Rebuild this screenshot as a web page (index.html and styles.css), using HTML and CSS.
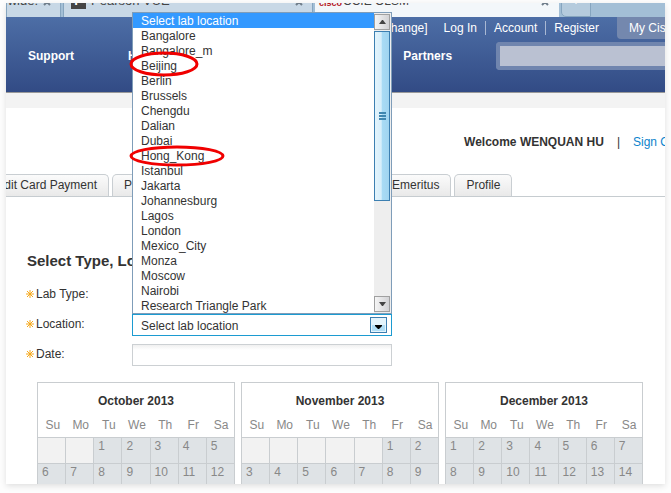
FILE: index.html
```
<!DOCTYPE html>
<html lang="en">
<head>
    <meta charset="UTF-8">
    <meta name="viewport" content="width=device-width, initial-scale=1.0">
    <title>CCIE OLSM</title>
    <link rel="stylesheet" href="styles.css">
</head>
<body>
<div class="window">
    <div class="browser-tabs">
        <div class="browser-tab first"><span>wide:</span><svg class="close" viewBox="0 0 8 8"><path d="M1 1L7 7M7 1L1 7"/></svg></div>
        <div class="browser-tab pearson"><span class="favicon">P</span><span>Pearson VUE</span><svg class="close" viewBox="0 0 8 8"><path d="M1 1L7 7M7 1L1 7"/></svg></div>
        <div class="browser-tab active"><span class="cisco">cisco</span><span>CCIE OLSM</span><svg class="close" viewBox="0 0 8 8"><path d="M1 1L7 7M7 1L1 7"/></svg></div>
        <button class="new-tab" type="button">+</button>
    </div>

    <header class="header">
        <div class="account-links">
            <a href="#" class="change">[change]</a>
            <a href="#">Log In</a>
            <a href="#">Account</a>
            <a href="#">Register</a>
            <a href="#" class="my-cisco">My Cisco</a>
        </div>
        <div class="main-row">
            <nav class="main-nav">
                <a href="#">Support</a>
                <a href="#">How to Buy</a>
                <a href="#">Training &amp; Events</a>
                <a href="#">Partners</a>
            </nav>
            <input class="search" type="text" aria-label="Search">
        </div>
    </header>

    <main class="content">
        <div class="welcome">
            <strong>Welcome WENQUAN HU</strong>
            <span>|</span>
            <a href="#">Sign Out</a>
        </div>

        <nav class="tabs">
            <a href="#">Credit Card Payment</a>
            <a href="#">Payment History</a>
            <a href="#" class="wide">Lab Exam History</a>
            <a href="#">Emeritus</a>
            <a href="#">Profile</a>
        </nav>

        <form class="lab-form">
            <h2>Select Type, Location and Date</h2>
            <div class="row">
                <label for="labType"><svg class="star" viewBox="0 0 8 8"><path d="M4 0V8M0 4H8M1 1L7 7M7 1L1 7"/></svg>Lab Type:</label>
                <select id="labType" class="field"><option></option></select>
            </div>
            <div class="row">
                <label for="location"><svg class="star" viewBox="0 0 8 8"><path d="M4 0V8M0 4H8M1 1L7 7M7 1L1 7"/></svg>Location:</label>
                <div class="combo">
                    <select id="location" class="field open"><option>Select lab location</option></select>
                    <svg class="combo-arrow" viewBox="0 0 17 16">
                        <rect x=".5" y=".5" width="16" height="15" fill="#e4f4fc" stroke="#3c7fb1"/>
                        <path d="M2 8H15V14H2Z" fill="#b1def6"/>
                        <path d="M5 8H12V9L9 12H8L5 9Z" fill="#000"/>
                    </svg>
                    <div class="dropdown">
                        <ul class="options" role="listbox" aria-label="Lab location">
                            <li role="option" aria-selected="true" class="selected">Select lab location</li>
                            <li role="option">Bangalore</li>
                            <li role="option">Bangalore_m</li>
                            <li role="option">Beijing
                                <svg class="mark beijing" viewBox="0 0 70 25"><ellipse cx="35" cy="12" rx="33" ry="11"/></svg>
                            </li>
                            <li role="option">Berlin</li>
                            <li role="option">Brussels</li>
                            <li role="option">Chengdu</li>
                            <li role="option">Dalian</li>
                            <li role="option">Dubai</li>
                            <li role="option">Hong_Kong
                                <svg class="mark hong-kong" viewBox="0 0 95 21"><ellipse cx="47" cy="10" rx="46" ry="9"/></svg>
                            </li>
                            <li role="option">Istanbul</li>
                            <li role="option">Jakarta</li>
                            <li role="option">Johannesburg</li>
                            <li role="option">Lagos</li>
                            <li role="option">London</li>
                            <li role="option">Mexico_City</li>
                            <li role="option">Monza</li>
                            <li role="option">Moscow</li>
                            <li role="option">Nairobi</li>
                            <li role="option">Research Triangle Park</li>
                        </ul>
                        <div class="scrollbar">
                            <button type="button" aria-label="Scroll up"><svg viewBox="0 0 7 4"><path d="M3 0H4L7 4H0Z"/></svg></button>
                            <div class="thumb"><i></i><i></i><i></i></div>
                            <button type="button" aria-label="Scroll down"><svg viewBox="0 0 7 4"><path d="M0 0H7L4 4H3Z"/></svg></button>
                        </div>
                    </div>
                </div>
            </div>
            <div class="row">
                <label for="date"><svg class="star" viewBox="0 0 8 8"><path d="M4 0V8M0 4H8M1 1L7 7M7 1L1 7"/></svg>Date:</label>
                <input id="date" class="field date" type="text">
            </div>
        </form>

        <div class="calendars">
            <table>
                <caption>October 2013</caption>
                <thead><tr><th>Su</th><th>Mo</th><th>Tu</th><th>We</th><th>Th</th><th>Fr</th><th>Sa</th></tr></thead>
                <tbody>
                    <tr><td class="empty"></td><td class="empty"></td><td>1</td><td>2</td><td>3</td><td>4</td><td>5</td></tr>
                    <tr><td>6</td><td>7</td><td>8</td><td>9</td><td>10</td><td>11</td><td>12</td></tr>
                </tbody>
            </table>
            <table>
                <caption>November 2013</caption>
                <thead><tr><th>Su</th><th>Mo</th><th>Tu</th><th>We</th><th>Th</th><th>Fr</th><th>Sa</th></tr></thead>
                <tbody>
                    <tr><td class="empty"></td><td class="empty"></td><td class="empty"></td><td class="empty"></td><td class="empty"></td><td>1</td><td>2</td></tr>
                    <tr><td>3</td><td>4</td><td>5</td><td>6</td><td>7</td><td>8</td><td>9</td></tr>
                </tbody>
            </table>
            <table>
                <caption>December 2013</caption>
                <thead><tr><th>Su</th><th>Mo</th><th>Tu</th><th>We</th><th>Th</th><th>Fr</th><th>Sa</th></tr></thead>
                <tbody>
                    <tr><td>1</td><td>2</td><td>3</td><td>4</td><td>5</td><td>6</td><td>7</td></tr>
                    <tr><td>8</td><td>9</td><td>10</td><td>11</td><td>12</td><td>13</td><td>14</td></tr>
                </tbody>
            </table>
        </div>
    </main>
</div>
</body>
</html>
```
FILE: styles.css
```
* {
    box-sizing: border-box;
}

body {
    margin: 0;
    padding: 3px 6px 9px;
    background-color: #fdfdfd;
    font-family: "Liberation Sans", Arial, sans-serif;
    font-size: 12px;
    color: #333;
}

a {
    text-decoration: none;
}

.window {
    overflow: hidden;
    background-color: #fff;
    box-shadow: 0 2px 6px rgba(0, 0, 0, 0.12);
}

/* browser tab strip */
.browser-tabs {
    display: flex;
    align-items: flex-end;
    gap: 2px;
    height: 14px;
    overflow: hidden;
    background-color: #a3bfd6;
}

.browser-tab {
    display: flex;
    flex-shrink: 0;
    align-items: flex-start;
    gap: 5px;
    height: 30px;
    padding: 0 9px;
    border: 1px solid #86a5bf;
    border-width: 0 1px;
    background-color: #c8d8e6;
    font-size: 13px;
    line-height: 28px;
    white-space: nowrap;
    color: #444;
}

.browser-tab.first {
    justify-content: flex-end;
    width: 55px;
}

.browser-tab.pearson {
    width: 250px;
    padding-left: 7px;
}

.browser-tab.active {
    gap: 1px;
    width: 244px;
    padding-left: 3px;
    border-color: #f3f7fa;
    background-color: #f3f7fa;
    font-size: 12px;
}

.close {
    flex-shrink: 0;
    width: 8px;
    height: 8px;
    margin-top: 11px;
    margin-left: auto;
    fill: none;
    stroke: #6f7d8a;
    stroke-width: 2px;
}

.favicon {
    width: 15px;
    height: 22px;
    background-color: #444;
    color: #fff;
    font-weight: bold;
    text-align: center;
}

.cisco {
    color: #b5121b;
    font-size: 9px;
    font-weight: bold;
    line-height: 32px;
}

.new-tab {
    width: 30px;
    height: 30px;
    padding: 0 0 4px;
    border: 1px solid #86a5bf;
    border-radius: 0 0 0 5px;
    background-color: #b5cbdd;
    color: #f5f8fa;
    font-size: 16px;
}

/* blue header */
.header {
    padding-bottom: 22px;
    border-bottom: 1px solid #999;
    background: linear-gradient(#4d6ea6, #324b85);
}

.header a {
    color: #fff;
}

.account-links {
    display: flex;
    justify-content: flex-end;
    align-items: center;
    height: 22px;
    white-space: nowrap;
}

.account-links a + a {
    padding-left: 8px;
    border-left: 1px solid #a9b8d3;
    margin-left: 8px;
}

.account-links .change + a {
    border-left: 0;
}

.account-links .my-cisco {
    width: 48px;
    height: 22px;
    margin-left: 18px;
    padding-left: 12px;
    border: 0;
    border-radius: 0 0 0 4px;
    background-color: #7488ae;
    line-height: 22px;
    overflow: hidden;
}

.main-row {
    display: flex;
    justify-content: space-between;
    align-items: center;
    margin-top: 3px;
    padding-left: 22px;
}

.main-nav {
    display: flex;
    gap: 54px;
    font-weight: bold;
    white-space: nowrap;
}

.search {
    width: 169px;
    height: 28px;
    border: 4px solid #7085ae;
    border-right: 0;
    border-radius: 4px 0 0 4px;
    background-color: #bac1d2;
}

/* page content */
.content {
    border-top: 15px solid #f3f3f3;
}

.welcome {
    display: flex;
    justify-content: flex-end;
    gap: 13px;
    padding: 26px 0 24px;
    line-height: 16px;
    white-space: nowrap;
}

.welcome a {
    width: 32px;
    overflow: hidden;
    color: #0c83cc;
}

.tabs {
    display: flex;
    gap: 3px;
    border-bottom: 1px solid #c6ccd0;
    white-space: nowrap;
}

.tabs a {
    flex-shrink: 0;
    height: 22px;
    padding: 0 11px;
    border: 1px solid #c9ced2;
    border-bottom: 0;
    border-radius: 5px 5px 0 0;
    background: linear-gradient(#fbfbfb, #e9e9e9);
    line-height: 20px;
    color: #333;
}

.tabs a:first-child {
    margin-left: -33px;
}

.tabs .wide {
    width: 150px;
}

.lab-form h2 {
    margin: 55px 0 14px 21px;
    font-size: 15px;
    line-height: 18px;
}

.row {
    display: grid;
    grid-template-columns: 106px 260px;
    margin: 0 20px 8px;
}

.row label {
    display: flex;
    align-items: center;
    gap: 2px;
    height: 20px;
}

.star {
    width: 8px;
    height: 8px;
    fill: none;
    stroke: #f5a81c;
}

.field {
    width: 100%;
    height: 22px;
    margin: 0;
    padding: 0 8px;
    border: 1px solid #ccd0d3;
    border-radius: 0;
    appearance: none;
    background-color: #fff;
    font: inherit;
    color: #333;
}

.field.open {
    padding-top: 2px;
    border-color: #1c9bd1;
}

.field.date {
    background: linear-gradient(#f0f0f0, #fff 5px);
}

.combo {
    position: relative;
}

.combo-arrow {
    position: absolute;
    top: 3px;
    right: 5px;
    width: 17px;
    height: 16px;
    pointer-events: none;
}

.dropdown {
    position: absolute;
    bottom: 100%;
    left: 0;
    right: 0;
    display: flex;
    border: 1px solid #7f9db9;
    background-color: #fff;
}

.options {
    flex: 1;
    margin: 0;
    padding: 0;
    list-style: none;
    line-height: 16px;
}

.options li {
    position: relative;
    height: 15px;
    padding-left: 8px;
}

.options .selected {
    background-color: #3399ff;
    color: #fff;
}

.mark {
    position: absolute;
    fill: none;
    stroke: #f00000;
    stroke-width: 3px;
    overflow: visible;
}

.beijing {
    top: -6px;
    left: -4px;
    width: 70px;
    height: 25px;
}

.hong-kong {
    top: -2px;
    left: -3px;
    width: 95px;
    height: 21px;
}

.scrollbar {
    display: flex;
    flex-direction: column;
    width: 17px;
    padding: 1px 1px 1px 0;
    background-color: #eee;
}

.scrollbar button {
    display: flex;
    justify-content: center;
    align-items: center;
    height: 16px;
    padding: 0;
    border: 1px solid #a0a0a0;
    background: linear-gradient(to right, #f5f5f5, #d2d2d5);
}

.scrollbar button:last-child {
    margin-top: auto;
}

.scrollbar svg {
    width: 7px;
    height: 4px;
    fill: #444;
}

.thumb {
    display: flex;
    flex-direction: column;
    justify-content: center;
    align-items: center;
    gap: 1px;
    height: 57%;
    margin-top: 1px;
    border: 1px solid #3c7fb1;
    background: linear-gradient(to right, #e3f4fc, #d6eefb 45%, #a9dbf5 50%, #a0d4f0);
}

.thumb i {
    width: 7px;
    height: 2px;
    background-color: #3f86b0;
}

/* calendars */
.calendars {
    display: grid;
    grid-template-columns: repeat(3, 1fr);
    gap: 6px;
    margin-top: 16px;
    padding: 0 22px 0 31px;
}

.calendars table {
    width: 100%;
    table-layout: fixed;
    border-collapse: collapse;
    color: #888;
}

.calendars caption {
    padding: 10px 0 6px;
    border: 1px solid #c9cdd0;
    border-bottom: 0;
    font-weight: bold;
    line-height: 16px;
    color: #333;
}

.calendars thead {
    border: 1px solid #c9cdd0;
    border-top: 0;
}

.calendars th {
    height: 22px;
    padding: 0 0 2px 2px;
    font-weight: normal;
}

.calendars td {
    height: 26px;
    padding: 1px 4px;
    border: 1px solid #c9cdd0;
    background-color: #dfe3e6;
    line-height: 14px;
    vertical-align: top;
}

.calendars td.empty {
    background-color: #f2f2f2;
}

.calendars tbody tr:last-child td {
    height: 21px;
    border-bottom: 0;
}
```
